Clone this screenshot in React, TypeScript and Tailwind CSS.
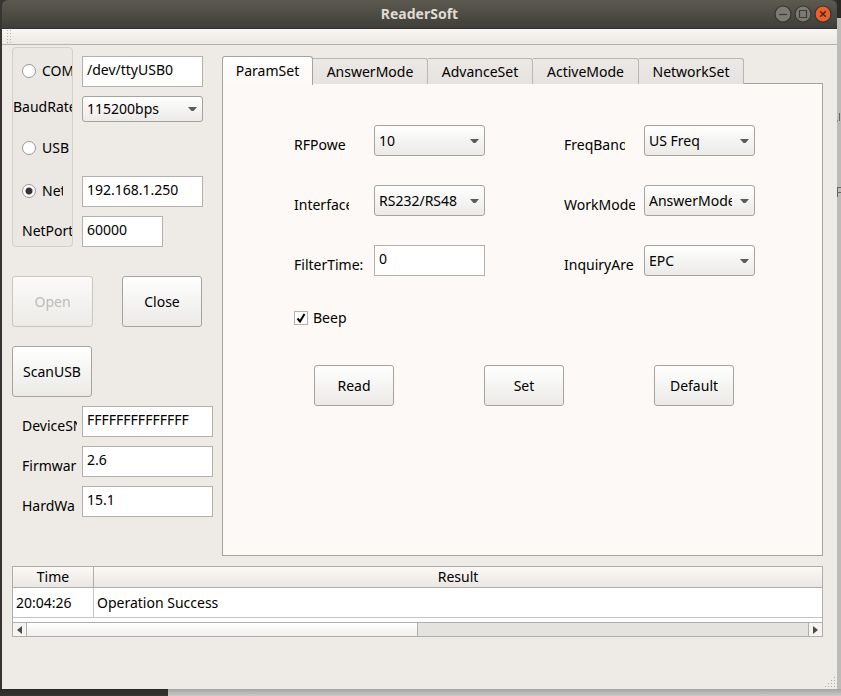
import { useState } from "react";

const buttonLook =
  "rounded-[3px] border border-[#a6a29d] bg-linear-to-b from-white to-[#ebeae7] text-center";
const inputLook =
  "block h-[31px] border border-[#b4b0ac] bg-white px-1 pb-1 outline-none";
const radioLook =
  "size-[14px] shrink-0 appearance-none rounded-full border border-[#9b9792] bg-white checked:bg-[radial-gradient(circle,#333_0,#333_3px,#fff_4px)]";

function Dropdown({ id, label, value, className }: { id: string; label?: string; value: string; className: string }) {
  return (
    <div className={`relative ${className}`}>
      <select
        id={id}
        aria-label={label}
        className={`block h-full w-full appearance-none overflow-hidden pr-[22px] pl-1 text-left text-clip outline-none ${buttonLook}`}
      >
        <option>{value}</option>
      </select>
      <svg className="pointer-events-none absolute top-1/2 right-[6px] -mt-[2px]" width="9" height="5" viewBox="0 0 9 5">
        <path d="M0 0h9L5.5 4h-2z" fill="#5b5b5b" />
      </svg>
    </div>
  );
}

function ClippedLabel({ htmlFor, text, width }: { htmlFor: string; text: string; width: string }) {
  return (
    <label htmlFor={htmlFor} className={`block overflow-hidden pt-[10px] whitespace-nowrap ${width}`}>
      {text}
    </label>
  );
}

function TitleBar() {
  return (
    <header className="grid h-[29px] grid-cols-[1fr_auto_1fr] items-center rounded-t-md border-b border-[#34332f] bg-linear-to-b from-[#5c5a50] to-[#3f3e39] px-[5px]">
      <span />
      <h1 className="text-sm font-bold text-[#dfdbd2]">ReaderSoft</h1>
      <div className="flex justify-end gap-[2px]">
        <button aria-label="Minimize">
          <svg width="18" height="18" viewBox="0 0 18 18">
            <circle cx="9" cy="9" r="8" fill="#7b7a73" stroke="#35342f" strokeWidth="1.2" />
            <path d="M5 9.5h8" stroke="#3c3b37" strokeWidth="1.2" />
          </svg>
        </button>
        <button aria-label="Maximize">
          <svg width="18" height="18" viewBox="0 0 18 18">
            <circle cx="9" cy="9" r="8" fill="#7b7a73" stroke="#35342f" strokeWidth="1.2" />
            <path d="M5.5 5.5h7v7h-7z" fill="none" stroke="#3c3b37" strokeWidth="1.2" />
          </svg>
        </button>
        <button aria-label="Close window">
          <svg width="18" height="18" viewBox="0 0 18 18">
            <circle cx="9" cy="9" r="8" fill="#ee5f2e" stroke="#35342f" strokeWidth="1.2" />
            <path d="M6.2 6.2l5.6 5.6M11.8 6.2l-5.6 5.6" stroke="#3c2b20" strokeWidth="1.5" />
          </svg>
        </button>
      </div>
    </header>
  );
}

function ToolbarStrip() {
  return (
    <div className="h-4 border-b border-[#b5b1ac] bg-linear-to-b from-[#f8f5f2] to-[#ece9e5] pl-1">
      <svg width="6" height="15" viewBox="0 0 6 15">
        {[1, 4, 7, 10, 13].map((y) => (
          <path key={y} d={`M1 ${y}h1v1h-1zM4 ${y}h1v1h-1z`} fill="#b3afaa" />
        ))}
      </svg>
    </div>
  );
}

function Connection() {
  const [mode, setMode] = useState("net");
  return (
    <div className="flex gap-[9px]">
      <fieldset className="h-[200px] w-[61px] min-w-0 overflow-hidden rounded-sm border border-[#d3d0cc] bg-[#ebe7e3] whitespace-nowrap">
        <label className="flex h-[46px] items-center gap-[6px] pl-[9px]">
          <input type="radio" name="mode" className={radioLook} checked={mode === "com"} onChange={() => setMode("com")} />
          COM
        </label>
        <label htmlFor="baud" className="flex h-[26px] items-center">BaudRate</label>
        <label className="flex h-[56px] items-center gap-[6px] pl-[9px]">
          <input type="radio" name="mode" className={radioLook} checked={mode === "usb"} onChange={() => setMode("usb")} />
          USB
        </label>
        <label className="flex h-[30px] w-[50px] items-center gap-[6px] overflow-hidden pl-[9px]">
          <input type="radio" name="mode" className={radioLook} checked={mode === "net"} onChange={() => setMode("net")} />
          Net
        </label>
        <label htmlFor="port" className="flex h-[50px] items-center pl-[9px]">NetPort</label>
      </fieldset>
      <div className="pt-[9px]">
        <input aria-label="COM device" className={`w-[121px] ${inputLook}`} defaultValue="/dev/ttyUSB0" />
        <Dropdown id="baud" value="115200bps" className="mt-[9px] h-[26px] w-[121px]" />
        <input aria-label="Net address" className={`mt-[54px] w-[121px] ${inputLook}`} defaultValue="192.168.1.250" />
        <input id="port" className={`mt-[9px] w-[81px] ${inputLook}`} defaultValue="60000" />
      </div>
    </div>
  );
}

function Sidebar() {
  return (
    <aside className="w-[201px] shrink-0 pt-[2px]">
      <Connection />
      <div className="mt-[29px] flex gap-[29px]">
        <button disabled className="h-[51px] w-[81px] rounded-[3px] border border-[#c9c6c2] bg-linear-to-b from-[#fbfaf9] to-[#edebe8] text-[#bdbbb8]">
          Open
        </button>
        <button className={`h-[51px] w-[80px] ${buttonLook}`}>Close</button>
      </div>
      <button className={`mt-[19px] h-[51px] w-[80px] ${buttonLook}`}>ScanUSB</button>
      <div className="mt-[9px] grid grid-cols-[60px_131px] gap-y-[9px] pl-[10px]">
        <ClippedLabel htmlFor="serial" text="DeviceSN" width="w-[55px]" />
        <input id="serial" className={inputLook} defaultValue="FFFFFFFFFFFFFF" />
        <ClippedLabel htmlFor="firmware" text="Firmwar" width="w-[55px]" />
        <input id="firmware" className={inputLook} defaultValue="2.6" />
        <ClippedLabel htmlFor="hardware" text="HardWa" width="w-[55px]" />
        <input id="hardware" className={inputLook} defaultValue="15.1" />
      </div>
    </aside>
  );
}

const otherTabs = [
  { name: "AnswerMode", width: "w-[115px]" },
  { name: "AdvanceSet", width: "w-[105px]" },
  { name: "ActiveMode", width: "w-[106px]" },
  { name: "NetworkSet", width: "w-[105px]" },
];

function Parameters() {
  return (
    <section className="min-w-0 flex-1 pt-[11px]">
      <div role="tablist" className="flex h-[28px] items-end">
        <button role="tab" aria-selected="true" className="z-10 -mb-px h-[29px] w-[91px] shrink-0 rounded-t-[3px] border border-b-0 border-[#a6a29d] bg-linear-to-b from-white to-[#fdf9f6]">
          ParamSet
        </button>
        {otherTabs.map((tab) => (
          <button
            key={tab.name}
            role="tab"
            aria-selected="false"
            className={`h-[26px] rounded-tr-[3px] border-t border-r border-[#b9b5b1] bg-linear-to-b from-[#ebe8e5] to-[#e6e2df] ${tab.width}`}
          >
            {tab.name}
          </button>
        ))}
      </div>
      <div role="tabpanel" className="-mt-px h-[473px] border border-[#a6a29d] bg-[#fdf9f6] px-[71px] pt-[41px]">
        <div className="grid grid-cols-[80px_111px_79px_80px_111px] gap-y-[29px]">
          <ClippedLabel htmlFor="power" text="RFPowe" width="w-[55px]" />
          <Dropdown id="power" value="10" className="h-[31px]" />
          <span />
          <ClippedLabel htmlFor="band" text="FreqBand" width="w-[61px]" />
          <Dropdown id="band" value="US Freq" className="h-[31px]" />

          <ClippedLabel htmlFor="interface" text="Interface" width="w-[55px]" />
          <Dropdown id="interface" value="RS232/RS48" className="h-[31px]" />
          <span />
          <ClippedLabel htmlFor="work" text="WorkMode" width="w-[71px]" />
          <Dropdown id="work" value="AnswerMode" className="h-[31px]" />

          <ClippedLabel htmlFor="filter" text="FilterTime:" width="w-[72px]" />
          <input id="filter" className={`w-full ${inputLook}`} defaultValue="0" />
          <span />
          <ClippedLabel htmlFor="area" text="InquiryAre" width="w-[71px]" />
          <Dropdown id="area" value="EPC" className="h-[31px]" />
        </div>
        <label className="mt-[30px] flex h-6 w-fit items-center gap-[5px]">
          <span className="relative">
            <input type="checkbox" defaultChecked className="peer block size-[14px] appearance-none border border-[#b4b0ac] bg-white" />
            <svg className="pointer-events-none absolute inset-0 hidden peer-checked:block" width="14" height="14" viewBox="0 0 14 14">
              <path d="M3.5 7.5L6 10.5L10.5 3" fill="none" stroke="#000" strokeWidth="2" />
            </svg>
          </span>
          Beep
        </label>
        <div className="mt-[35px] flex gap-[90px] pl-5">
          <button className={`h-[41px] w-[80px] ${buttonLook}`}>Read</button>
          <button className={`h-[41px] w-[80px] ${buttonLook}`}>Set</button>
          <button className={`h-[41px] w-[80px] ${buttonLook}`}>Default</button>
        </div>
      </div>
    </section>
  );
}

function Log() {
  return (
    <div className="mt-[10px] border border-[#b1adaa] bg-white">
      <table className="w-full table-fixed border-separate border-spacing-0">
        <thead>
          <tr className="h-[21px] bg-linear-to-b from-[#fbf8f5] to-[#e9e6e3]">
            <th className="w-[81px] border-r border-b border-[#b1adaa] p-0 font-normal">Time</th>
            <th className="border-b border-[#b1adaa] p-0 font-normal">Result</th>
          </tr>
        </thead>
        <tbody>
          <tr className="h-[30px]">
            <td className="border-r border-b border-[#c6c3c0] p-0 pl-[3px]">20:04:26</td>
            <td className="border-b border-[#c6c3c0] p-0 pl-[3px]">Operation Success</td>
          </tr>
        </tbody>
      </table>
      <div className="mt-1 flex h-[14px] border-t border-[#b1adaa] bg-[#e4e3df]">
        <button aria-label="Scroll left" className="flex w-[14px] items-center justify-center border-r border-[#b1adaa] bg-[#f6f4f2]">
          <svg width="5" height="8" viewBox="0 0 5 8"><path d="M5 0v8L0 4z" fill="#4c4c4c" /></svg>
        </button>
        <div className="w-[391px] border-r border-[#b1adaa] bg-linear-to-b from-white to-[#f1efed]" />
        <button aria-label="Scroll right" className="ml-auto flex w-[14px] items-center justify-center border-l border-[#b1adaa] bg-[#f6f4f2]">
          <svg width="5" height="8" viewBox="0 0 5 8"><path d="M0 0v8l5-4z" fill="#4c4c4c" /></svg>
        </button>
      </div>
    </div>
  );
}

export default function App() {
  return (
    <div className="flex min-h-screen flex-col bg-[#363531] font-['Noto_Sans','Open_Sans',sans-serif] text-[14px] leading-5 text-black">
      <div className="flex flex-1">
        <div className="w-[2px] bg-[#363531]" />
        <main className="flex min-w-0 flex-1 flex-col bg-[#363531]">
          <TitleBar />
          <ToolbarStrip />
          <div className="flex flex-1 flex-col bg-[#eeebe6] pr-[14px] pl-[10px]">
            <div className="flex gap-[9px]">
              <Sidebar />
              <Parameters />
            </div>
            <Log />
          </div>
          <div className="flex justify-end bg-[#eeebe6]">
            <svg width="12" height="12" viewBox="0 0 12 12">
              <path d="M9 0h1v1h-1zM6 3h1v1h-1zM9 3h1v1h-1zM3 6h1v1h-1zM6 6h1v1h-1zM9 6h1v1h-1zM0 9h1v1h-1zM3 9h1v1h-1zM6 9h1v1h-1zM9 9h1v1h-1z" fill="#b0aca7" />
            </svg>
          </div>
        </main>
        <div className="w-[4px] border-t-[18px] border-[#2c2b28] bg-[#bcbbba]">
          <svg width="4" height="190" viewBox="0 0 4 190">
            <path d="M0 103h1M2.500 95v8M0 169.500h4M.5 169v10M1 174.500h3" fill="none" stroke="#66656a" />
          </svg>
        </div>
      </div>
      <div className="flex h-[7px]">
        <div className="w-[168px] bg-linear-to-b from-[#2b2a27] to-[#363531]" />
        <div className="flex-1 bg-linear-to-b from-[#a5a4a2] to-[#cbcac9]" />
      </div>
    </div>
  );
}
